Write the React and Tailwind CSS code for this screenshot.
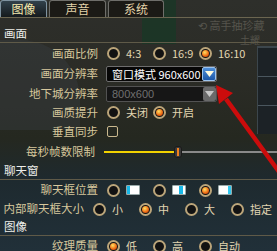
import React from 'react';

const Radio = ({ on }) => (
  <span className="w-[13px] h-[13px] shrink-0 rounded-full border-2 border-[#bba57a] bg-[#121212] flex items-center justify-center">
    {on && (
      <span className="w-[7px] h-[7px] rounded-full bg-[radial-gradient(circle_at_40%_35%,#ffe060_0%,#f07018_55%,#a02800_100%)]" />
    )}
  </span>
);

const Option = ({ on, children }) => (
  <div className="w-[46px] flex items-center gap-[6px] shrink-0">
    <Radio on={on} />
    {children}
  </div>
);

const ChatIcon = ({ pos }) => (
  <span className="w-[14px] h-[10px] flex bg-white border border-[#9aa] rounded-[1px] overflow-hidden">
    {pos === 'left' && <span className="w-[3px] h-full bg-[#18b8e8]" />}
    {pos === 'mid' && (
      <>
        <span className="w-[6px] h-full" />
        <span className="w-[4px] h-full bg-[#18b8e8]" />
      </>
    )}
    {pos === 'right' && (
      <>
        <span className="w-[9px] h-full" />
        <span className="w-[3px] h-full bg-[#30c8f0]" />
      </>
    )}
  </span>
);

const Row = ({ label, h = 'h-[20px]', children }) => (
  <div className={`flex items-center ${h}`}>
    <div className="w-[98px] text-right text-[#d6c79c] whitespace-nowrap text-[11.5px]">{label}</div>
    <div className="ml-[9px] flex items-center">{children}</div>
  </div>
);

const Section = ({ h, children }) => (
  <div className={`${h} flex items-end pb-[3px] pl-[4px] text-[#eeeeea] text-[11.5px] border-b border-[#5f5a48]`}>
    {children}
  </div>
);

const Opt = ({ children }) => <span className="text-[#e2d6b2] whitespace-nowrap text-[11px]">{children}</span>;

export default function App() {
  return (
    <div className="relative w-[277px] h-[251px] overflow-hidden bg-[linear-gradient(180deg,#2e2f2b_0%,#2a2b25_35%,#252820_55%,#1e2a2f_72%,#213039_100%)] font-['Noto_Sans_CJK_SC','Liberation_Sans',sans-serif] text-[11.5px] leading-none">
      {/* background scenery */}
      <div className="absolute left-0 top-[40px] w-[80px] h-[90px] bg-[#3a3f44] opacity-40 rounded-tr-[60px]" />
      <div className="absolute left-[142px] top-0 w-[34px] h-[44px] bg-[#123a24] opacity-60" />
      <div className="absolute left-[198px] top-[20px] text-[#55544c] text-[11px] whitespace-nowrap">⟲ 高手抽珍藏</div>
      <div className="absolute left-[240px] top-[35px] text-[#55544c] text-[10px]">土耀</div>
      <div className="absolute left-[257px] top-[46px] w-[20px] h-[88px] bg-[#1c2226] border-t-2 border-l border-[#3c464c] flex flex-col justify-evenly">
        <div className="h-px bg-[#4a565e]" />
        <div className="h-px bg-[#4a565e]" />
      </div>

      <div className="relative flex flex-col">
        {/* tabs */}
        <div className="h-[18px] flex items-end gap-[2px] border-b border-[#6b6550]">
          <div className="w-[47px] h-[17px] flex items-center justify-center rounded-t-[3px] border border-b-0 border-[#7f93a0] bg-[linear-gradient(180deg,#31414b_0%,#151a1d_100%)] text-[#f4e9ad] text-[12px]">
            图像
          </div>
          <div className="w-[57px] h-[17px] flex items-center justify-center rounded-t-[3px] border border-b-0 border-[#6e6e6a] bg-[#1b1a16] text-[#e3d3aa] text-[12px]">
            声音
          </div>
          <div className="w-[56px] h-[17px] flex items-center justify-center rounded-t-[3px] border border-b-0 border-[#6e6e6a] bg-[#1b1a16] text-[#e3d3aa] text-[12px]">
            系统
          </div>
        </div>

        <Section h="h-[25px]">画面</Section>

        <Row label="画面比例" h="h-[21px]">
          <Option><Opt>4:3</Opt></Option>
          <Option><Opt>16:9</Opt></Option>
          <Option on><Opt>16:10</Opt></Option>
        </Row>

        <Row label="画面分辨率">
          <div className="-ml-[1px] w-[111px] h-[16px] flex items-center justify-between bg-[#060606] border border-[#6d6d6d] rounded-[2px]">
            <span className="pl-[5px] text-white whitespace-nowrap text-[11px]">窗口模式 960x600</span>
            <span className="w-[14px] h-[14px] flex items-center justify-center rounded-[2px] border border-[#9cc4ee] bg-[linear-gradient(180deg,#4f8fd8_0%,#1d57a8_100%)]">
              <svg width="9" height="6" viewBox="0 0 9 6"><path d="M0 0H9L4.5 6Z" fill="#fffbe0" /></svg>
            </span>
          </div>
        </Row>

        <Row label="地下城分辨率">
          <div className="-ml-[1px] w-[111px] h-[16px] flex items-center justify-between bg-[#161616] border border-[#525252] rounded-[2px]">
            <span className="pl-[5px] text-[#707070] text-[11px] font-['Liberation_Sans',sans-serif]">800x600</span>
            <span className="w-[13px] h-[14px] flex items-center justify-center rounded-[2px] bg-[#6a6a6a]">
              <svg width="9" height="6" viewBox="0 0 9 6"><path d="M0 0H9L4.5 6Z" fill="#c8c8c8" /></svg>
            </span>
          </div>
        </Row>

        <Row label="画质提升" h="h-[17px]">
          <Option><Opt>关闭</Opt></Option>
          <Option on><Opt>开启</Opt></Option>
        </Row>

        <Row label="垂直同步" h="h-[21px]">
          <span className="w-[11px] h-[11px] border-[1.5px] border-[#c9b88e] rounded-[2px]" />
        </Row>

        <Row label="每秒帧数限制">
          <div className="flex items-center">
            <div className="w-[70px] h-[2px] bg-[#f2d200]" />
            <div className="w-[8px] h-[12px] rounded-[3px] border border-[#1a1a1a] bg-[#3a3a3a] flex items-center justify-center">
              <span className="w-[2px] h-[8px] bg-[#f08020]" />
            </div>
            <div className="w-[95px] h-[2px] bg-[#8a8a8a]" />
          </div>
        </Row>

        <Section h="h-[18px]">聊天窗</Section>

        <Row label="聊天框位置">
          <Option><ChatIcon pos="left" /></Option>
          <Option><ChatIcon pos="mid" /></Option>
          <Option on><ChatIcon pos="right" /></Option>
        </Row>

        <Row label="内部聊天框大小" h="h-[18px]">
          <Option><Opt>小</Opt></Option>
          <Option on><Opt>中</Opt></Option>
          <Option><Opt>大</Opt></Option>
          <Option><Opt>指定</Opt></Option>
        </Row>

        <Section h="h-[18px]">图像</Section>

        <Row label="纹理质量">
          <Option on><Opt>低</Opt></Option>
          <Option><Opt>高</Opt></Option>
          <Option><Opt>自动</Opt></Option>
        </Row>
      </div>

      {/* red annotation arrow */}
      <svg className="absolute left-0 top-0" width="277" height="251" viewBox="0 0 277 251">
        <line x1="285" y1="180" x2="226" y2="99" stroke="#cc0c0c" strokeWidth="4.5" />
        <path d="M216 85 L233 93 L219 104 Z" fill="#cc0c0c" />
      </svg>
    </div>
  );
}
